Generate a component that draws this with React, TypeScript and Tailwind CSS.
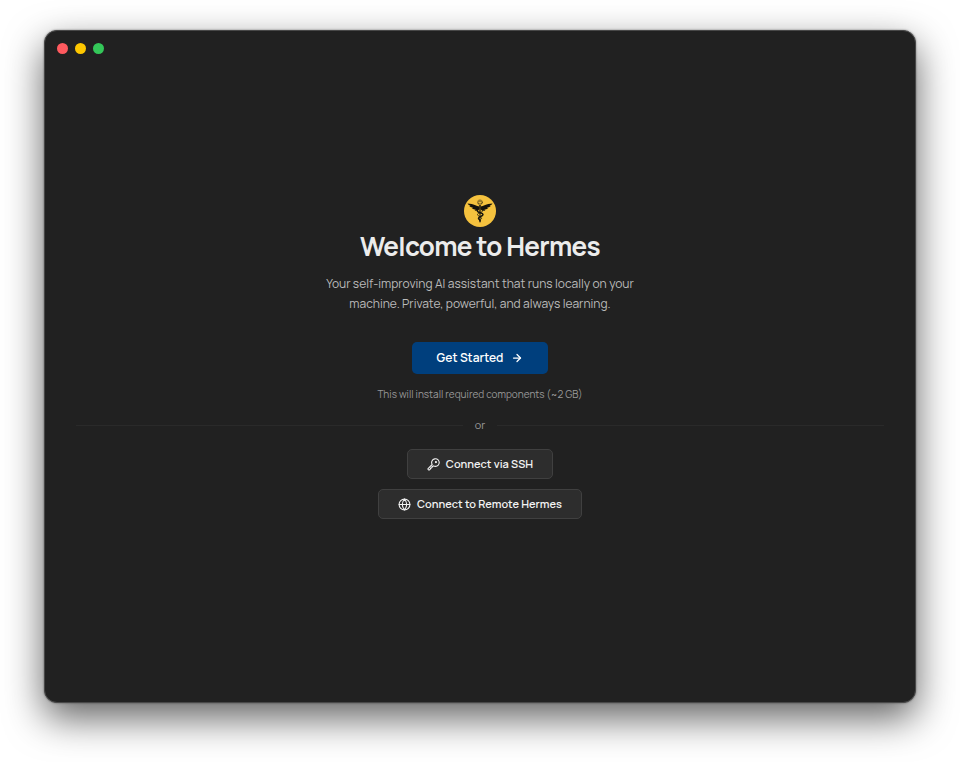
import React from "react";
import { ArrowRight, Globe } from "lucide-react";

function HermesLogo() {
  return (
    <svg className="size-8" viewBox="0 0 64 64" role="img" aria-label="Hermes">
      <circle cx="32" cy="32" r="32" fill="#f5c23e" />
      <g fill="#15130c">
        <path d="M31 23 C25 22 20 18 7 17 C9 20 11 21 13 21.500 C12 22 11 22 10.500 22 C13 25 16 25 18 25 C17 26 16 26 15.500 26 C18 29 21 29 23 29 C23 30 22 30.500 21 30.500 C25 33 29 31 31 28 Z" />
        <path d="M33 23 C39 22 44 18 57 17 C55 20 53 21 51 21.500 C52 22 53 22 53.500 22 C51 25 48 25 46 25 C47 26 48 26 48.500 26 C46 29 43 29 41 29 C41 30 42 30.500 43 30.500 C39 33 35 31 33 28 Z" />
        <path d="M30.500 20 H33.500 L32.700 55 H31.300 Z" />
      </g>
      <g fill="none" stroke="#15130c" strokeLinecap="round">
        <path d="M27 31 C25 36 38 35 38 39 C38 43 29 43 29 46.500 C29 49 33 49 32 52" strokeWidth="3" />
        <path d="M37 31 C39 36 27 35 27 39 C27 43 35 43 35 46.500 C35 49 31 49 32 52" strokeWidth="1.600" />
        <circle cx="32" cy="14.500" r="5" strokeWidth="1" opacity="0.700" />
        <path d="M28.500 17 C26 11 34 9.500 34 14 M35.500 17 C38 11 30 9.500 30 14 M29 17 H35" strokeWidth="1" opacity="0.700" />
      </g>
    </svg>
  );
}

function KeyIcon() {
  return (
    <svg className="size-[13px]" viewBox="0 0 24 24" fill="none" stroke="currentColor" strokeWidth="2" strokeLinecap="round" strokeLinejoin="round" aria-hidden="true">
      <path d="M9.500 12 L2 19.500 a1.500 1.500 0 0 0 0 1.500 l1 1 a1.500 1.500 0 0 0 1.500 0 l2 -2 v-1.500 h1.500 l1.500 -1.500 v-1.500 h1.500 l1 -1 a7 7 0 1 0 -2.500 -2.500 z" />
      <circle cx="16.500" cy="7.500" r="1" fill="currentColor" />
    </svg>
  );
}

function SecondaryButton({ icon, children }: { icon: React.ReactNode; children: React.ReactNode }) {
  return (
    <button type="button" className="flex h-[30px] items-center gap-1.5 rounded-[5px] border border-[#404040] bg-[#2d2d2d] px-[19px] text-[11px] font-semibold text-[#f2f2f2]">
      {icon}
      {children}
    </button>
  );
}

export default function App() {
  return (
    <div className="flex min-h-screen flex-col bg-white px-11 pt-[30px] pb-[59px] font-['Manrope','Inter',sans-serif]">
      <div className="flex flex-1 flex-col rounded-[13px] border border-[#484848] bg-[#212121] shadow-[0_15px_38px_rgba(0,0,0,0.62),0_0_2px_rgba(0,0,0,0.5)]">
        <header className="flex gap-[7px] px-3 pt-3">
          <span className="size-[11px] rounded-full bg-[#ff5a5f]" />
          <span className="size-[11px] rounded-full bg-[#fdc700]" />
          <span className="size-[11px] rounded-full bg-[#34c759]" />
        </header>
        <main className="flex flex-1 flex-col items-center justify-center px-[31px] pb-[42px] text-center">
          <HermesLogo />
          <h1 className="mt-[3px] text-[26px] leading-8 font-bold tracking-tight text-[#ececec]">Welcome to Hermes</h1>
          <p className="mt-3 w-80 text-xs leading-5 text-[#bababa]">
            Your self-improving AI assistant that runs locally on your machine. Private, powerful, and always learning.
          </p>
          <button type="button" className="mt-7 flex h-8 items-center gap-2 rounded-[5px] bg-[#003f7d] px-[25px] text-xs font-semibold text-white">
            Get Started
            <ArrowRight className="size-3" strokeWidth={2.5} />
          </button>
          <p className="mt-3 text-[10px] leading-4 text-[#999999]">This will install required components (~2 GB)</p>
          <div className="mt-[15px] flex w-full items-center gap-3 text-[11px] leading-4 text-[#999999]">
            <span className="h-px flex-1 bg-[#2a2a2a]" />
            or
            <span className="h-px flex-1 bg-[#2a2a2a]" />
          </div>
          <div className="mt-4 flex flex-col items-center gap-2.5">
            <SecondaryButton icon={<KeyIcon />}>Connect via SSH</SecondaryButton>
            <SecondaryButton icon={<Globe className="size-[13px]" />}>Connect to Remote Hermes</SecondaryButton>
          </div>
        </main>
      </div>
    </div>
  );
}
